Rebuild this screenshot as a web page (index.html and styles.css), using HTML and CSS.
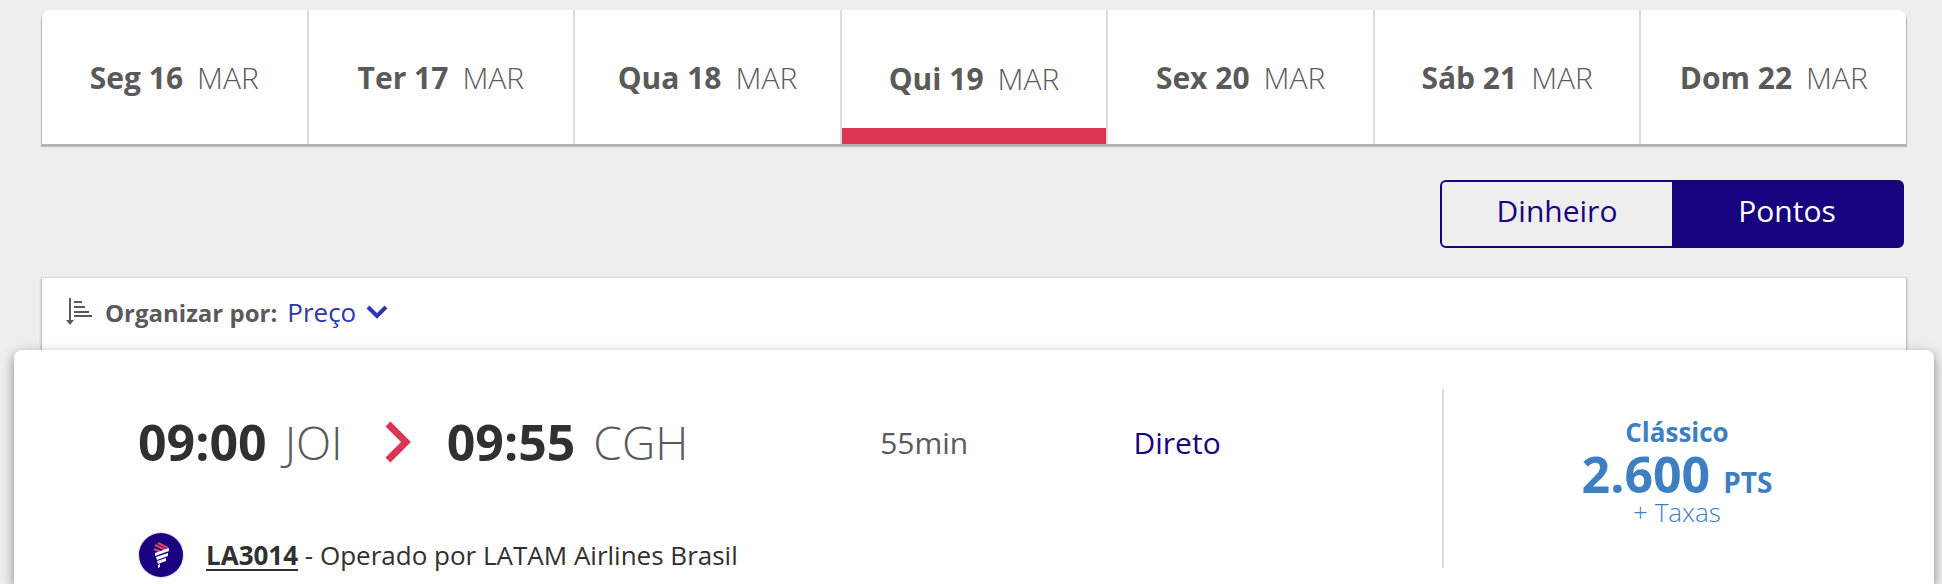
FILE: index.html
```html
<!DOCTYPE html>
<html lang="pt-BR">

<head>
    <meta charset="UTF-8">
    <meta name="viewport" content="width=device-width, initial-scale=1.0">
    <title>Voos JOI - CGH</title>
    <link rel="stylesheet" href="styles.css">
</head>

<body>
    <nav class="days">
        <a class="day" href="#seg"><b>Seg 16</b><span>MAR</span></a>
        <a class="day" href="#ter"><b>Ter 17</b><span>MAR</span></a>
        <a class="day" href="#qua"><b>Qua 18</b><span>MAR</span></a>
        <a class="day active" href="#qui"><b>Qui 19</b><span>MAR</span></a>
        <a class="day" href="#sex"><b>Sex 20</b><span>MAR</span></a>
        <a class="day" href="#sab"><b>Sáb 21</b><span>MAR</span></a>
        <a class="day" href="#dom"><b>Dom 22</b><span>MAR</span></a>
    </nav>

    <div class="currency">
        <button type="button">Dinheiro</button>
        <button type="button" class="on">Pontos</button>
    </div>

    <div class="sort">
        <svg class="sort-icon" width="27" height="28" viewBox="0 0 27 28">
            <path d="M4 0V23" stroke="#5a5a5a" stroke-width="2" />
            <path d="M0 22H8L4 27Z" fill="#5a5a5a" />
            <path d="M8 4H16M8 9H19M8 14H23M8 18H26" stroke="#5a5a5a" stroke-width="2" />
        </svg>
        <label for="order">Organizar por:</label>
        <select id="order">
            <option>Preço</option>
        </select>
        <svg width="22" height="14" viewBox="0 0 22 14">
            <path d="M2 2L11 11L20 2" fill="none" stroke="#2d35b0" stroke-width="4" />
        </svg>
    </div>

    <main class="flight">
        <section class="info">
            <div class="route">
                <b>09:00</b><span>JOI</span>
                <svg width="26" height="42" viewBox="0 0 26 42">
                    <path d="M3 3L21 21L3 39" fill="none" stroke="#d93654" stroke-width="7" />
                </svg>
                <b>09:55</b><span>CGH</span>
            </div>
            <div class="duration">55min</div>
            <a class="stops" href="#direto">Direto</a>
            <div class="operator">
                <svg width="46" height="46" viewBox="0 0 46 46">
                    <circle cx="23" cy="23" r="23" fill="#e2def4" />
                    <circle cx="23" cy="23" r="22" fill="#1b0080" />
                    <path d="M20 11L30 16M17 13L28 18M16 17L23 20" stroke="#e0446c" stroke-width="2" />
                    <path d="M17 21L31 16V19L17 24ZM18 25L30 21V24L19 28ZM19 29L28 26V29L20 32ZM20 33L22 32V35L20 36Z" fill="#fff" />
                </svg>
                <p><a href="#la3014">LA3014</a> - Operado por LATAM Airlines Brasil</p>
            </div>
        </section>
        <section class="fare">
            <h2>Clássico</h2>
            <p class="points">2.600 <small>PTS</small></p>
            <p class="tax">+ Taxas</p>
        </section>
    </main>
</body>

</html>
```

FILE: styles.css
```css
* {
    margin: 0;
    padding: 0;
    box-sizing: border-box;
}

body {
    background: #eee;
    color: #5a5a5a;
    font-family: "Open Sans", "Noto Sans", sans-serif;
    font-size: 30px;
    padding: 10px 8px 0 14px;
}

a {
    color: inherit;
    text-decoration: none;
}

button,
select {
    font: inherit;
    border: 0;
    background: none;
}

.days {
    display: flex;
    height: 134px;
    margin: 0 28px;
    background: #fff;
    border-radius: 8px 8px 0 0;
    box-shadow: 0 2px 1px 1px #b4b4b4;
}

.day {
    flex: 1;
    display: flex;
    align-items: center;
    justify-content: center;
    gap: 14px;
    border-right: 2px solid #ddd;
}

.day:last-child {
    border-right: 0;
}

.day span {
    font-weight: 300;
}

.day.active {
    padding-top: 2px;
    background: linear-gradient(to top, #d93654 16px, #fff 16px) padding-box;
}

.currency {
    display: flex;
    width: 464px;
    height: 68px;
    margin: 36px 30px 30px auto;
    border: 2px solid #18037f;
    border-radius: 6px;
}

.currency button {
    flex: 1;
    padding-bottom: 8px;
    color: #18037f;
}

.currency .on {
    background: #18037f;
    color: #fff;
}

.sort {
    display: flex;
    align-items: center;
    height: 72px;
    margin: 0 28px;
    padding: 0 24px 4px;
    background: #fff;
    box-shadow: 0 1px 2px 1px #b0b0b0;
    font-size: 26px;
}

.sort-icon {
    margin-right: 12px;
}

.sort label {
    font-size: 24px;
    font-weight: bold;
    margin-right: 10px;
}

.sort select {
    appearance: none;
    color: #2d35b0;
    margin-right: 10px;
}

.flight {
    position: relative;
    display: grid;
    grid-template-columns: 1428fr 492fr;
    padding-top: 39px;
    background: #fff;
    border-radius: 8px 8px 0 0;
    box-shadow: 0 4px 12px rgba(0, 0, 0, .45);
}

.info {
    display: grid;
    grid-template-columns: 741fr 253fr 308fr;
    grid-template-rows: 106px 1fr;
    align-items: center;
    padding: 0 0 6px 124px;
}

.route {
    display: flex;
    align-items: center;
    color: #303030;
    font-size: 50px;
    line-height: 60px;
}

.route span {
    margin-left: 18px;
    color: #5a5a5a;
    font-size: 46px;
    font-weight: 300;
}

.route svg {
    margin: 0 36px 0 42px;
}

.stops {
    color: #18037f;
}

.operator {
    grid-column: 1 / -1;
    align-self: end;
    display: flex;
    align-items: center;
    gap: 22px;
    color: #303030;
    font-size: 26px;
}

.operator a {
    font-weight: bold;
    text-decoration: underline 2px;
    text-underline-offset: 4px;
}

.fare {
    height: 179px;
    margin-bottom: 16px;
    padding: 21px 24px 0 0;
    border-left: 2px solid #ddd;
    color: #3d7fc1;
    text-align: center;
}

.fare h2 {
    font-size: 26px;
    line-height: 44px;
}

.points {
    font-size: 50px;
    font-weight: bold;
    line-height: 40px;
}

.points small {
    font-size: 28px;
}

.tax {
    font-size: 26px;
    font-weight: 300;
    line-height: 20px;
}
```
